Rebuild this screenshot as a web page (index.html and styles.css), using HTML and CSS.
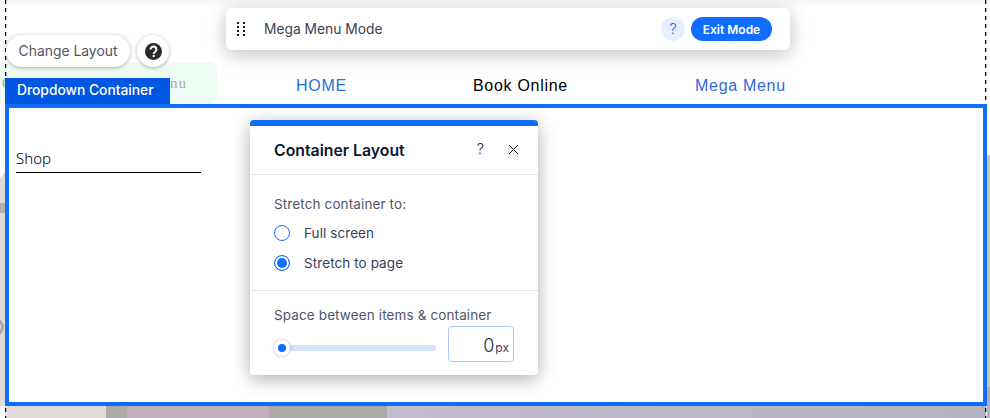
FILE: index.html
```html
<!DOCTYPE html>
<html lang="en">
<head>
    <meta charset="UTF-8">
    <title>Mega Menu Mode</title>
    <link rel="stylesheet" href="styles.css">
</head>
<body>
    <div class="stage">
        <div class="strip-left">
            <div class="cut-ring"></div>
        </div>
        <div class="strip-right"></div>

        <nav class="site-nav">
            <a class="nav-home">HOME</a>
            <a class="nav-book">Book Online</a>
            <a class="nav-mega">Mega Menu</a>
        </nav>

        <div class="ghost-tab"><span>O</span><span>Menu</span></div>

        <div class="page-strip">
            <div class="seg seg-sand"></div>
            <div class="seg seg-grey1"></div>
            <div class="seg seg-mauve"></div>
            <div class="seg seg-grey2"></div>
            <div class="seg seg-lilac"></div>
        </div>

        <div class="guide guide-left"></div>
        <div class="guide guide-right"></div>

        <div class="dropdown-box">
            <div class="shop-item">Shop</div>
        </div>
        <div class="dropdown-label">Dropdown Container</div>

        <div class="layout-row">
            <button class="pill">Change Layout</button>
            <button class="pill-help">
                <svg width="19" height="19" viewBox="0 0 19 19">
                    <circle cx="9.5" cy="9.5" r="8.5" fill="#2b2b2e"/>
                    <path d="M6.6 7.4a2.9 2.9 0 1 1 4.6 2.3c-1 .7-1.5 1.1-1.5 2.2" fill="none" stroke="#fff" stroke-width="2"/>
                    <rect x="8.6" y="13" width="2.1" height="2.1" fill="#fff"/>
                </svg>
            </button>
        </div>

        <div class="mode-bar">
            <svg class="drag" width="9" height="15" viewBox="0 0 9 15">
                <g fill="#16182c">
                    <rect x="0" y="0" width="2" height="2"/><rect x="6" y="0" width="2" height="2"/>
                    <rect x="0" y="4" width="2" height="2"/><rect x="6" y="4" width="2" height="2"/>
                    <rect x="0" y="8" width="2" height="2"/><rect x="6" y="8" width="2" height="2"/>
                    <rect x="0" y="12" width="2" height="2"/><rect x="6" y="12" width="2" height="2"/>
                </g>
            </svg>
            <span class="mode-title">Mega Menu Mode</span>
            <span class="mode-help">?</span>
            <button class="exit-btn">Exit Mode</button>
        </div>

        <div class="panel">
            <div class="panel-head">
                <h2>Container Layout</h2>
                <span class="panel-help">?</span>
                <svg class="panel-close" width="11" height="11" viewBox="0 0 11 11">
                    <path d="M1 1l9 9M10 1l-9 9" stroke="#16182c" stroke-width="1" fill="none"/>
                </svg>
            </div>
            <div class="panel-section">
                <div class="section-label">Stretch container to:</div>
                <label class="radio-row"><span class="radio"></span>Full screen</label>
                <label class="radio-row"><span class="radio radio-on"></span>Stretch to page</label>
            </div>
            <div class="panel-section section-space">
                <div class="section-label">Space between items &amp; container</div>
                <div class="slider-row">
                    <div class="slider">
                        <div class="slider-track"></div>
                        <div class="slider-knob"></div>
                    </div>
                    <div class="num-input"><span class="num">0</span><span class="unit">px</span></div>
                </div>
            </div>
        </div>
    </div>
</body>
</html>
```

FILE: styles.css
```css
html, body {
    margin: 0;
    padding: 0;
    background: #fff;
}
.stage {
    position: relative;
    width: 990px;
    height: 418px;
    overflow: hidden;
    font-family: "Inter", "Noto Sans", sans-serif;
    background: linear-gradient(#f6f6f6, #fff 8px);
}
button {
    font-family: inherit;
    border: none;
    padding: 0;
}

/* editor guides */
.guide {
    position: absolute;
    top: 0;
    width: 1px;
    height: 418px;
    background: repeating-linear-gradient(#000 0 4px, transparent 4px 8px);
    border-right: 1px solid rgba(255,255,255,0.7);
}
.guide-left { left: 5px; }
.guide-right { left: 985px; }

/* page content peeking out round the container */
.strip-left {
    position: absolute;
    left: 0;
    top: 172px;
    width: 5px;
    height: 234px;
    overflow: hidden;
    background: linear-gradient(#dfdad7 31px, #b0b0b0 31px 41px, #dfdad7 41px);
    clip-path: polygon(0 6px, 100% 0, 100% 100%, 0 100%);
}
.cut-ring {
    position: absolute;
    left: -14px;
    top: 146px;
    width: 12px;
    height: 12px;
    border: 3px solid #a9a7a5;
    border-radius: 50%;
}
.strip-right {
    position: absolute;
    left: 987px;
    top: 155px;
    width: 3px;
    height: 263px;
    background: linear-gradient(#c3ccc9 232px, #b5b1c0 232px);
}

/* site menu behind the overlays */
.site-nav {
    position: absolute;
    left: 0;
    top: 77px;
    font-family: "Liberation Sans", Arial, sans-serif;
    font-size: 16px;
    letter-spacing: 0.7px;
    line-height: 18px;
}
.site-nav a { position: absolute; top: 0; white-space: nowrap; }
.nav-home { left: 296px; color: #1f6fe0; }
.nav-book { left: 473px; color: #000; }
.nav-mega { left: 695px; color: #2f68d8; }

.ghost-tab {
    position: absolute;
    left: 0;
    top: 62px;
    width: 217px;
    height: 42px;
    box-sizing: border-box;
    padding: 12px 30px 0 2px;
    display: flex;
    justify-content: space-between;
    background: #eefbf3;
    border-radius: 0 8px 8px 0;
    font-family: "Liberation Serif", serif;
    font-size: 15px;
    letter-spacing: 1px;
    line-height: 18px;
    color: #a5ada5;
}

.page-strip {
    position: absolute;
    left: 5px;
    top: 406px;
    width: 985px;
    height: 12px;
    display: flex;
}
.seg-sand { width: 101px; background: #e0d9d6; }
.seg-grey1 { width: 21px; background: #ababab; }
.seg-mauve { width: 142px; background: #c2afbd; }
.seg-grey2 { width: 118px; background: #ababab; }
.seg-lilac { flex: 1; background: linear-gradient(90deg, #c5bccf, #b5b1c0); }

/* selected container */
.dropdown-box {
    position: absolute;
    left: 5px;
    top: 104px;
    width: 974px;
    height: 294px;
    background: #fff;
    border: 4px solid #116dff;
}
.shop-item {
    position: absolute;
    left: 7px;
    top: 38px;
    width: 185px;
    height: 26px;
    border-bottom: 1px solid #000;
    font-family: "Noto Sans", sans-serif;
    font-weight: 300;
    font-size: 15px;
    line-height: 24px;
    color: #000;
}
.dropdown-label {
    position: absolute;
    left: 5px;
    top: 78px;
    width: 165px;
    height: 26px;
    box-sizing: border-box;
    padding-left: 12px;
    background: #0057e1;
    color: #fff;
    font-size: 13.8px;
    font-weight: 500;
    line-height: 25px;
}

.layout-row {
    position: absolute;
    left: 6px;
    top: 35px;
    display: flex;
    gap: 7px;
}
.pill {
    height: 32px;
    width: 124px;
    background: #fff;
    border-radius: 16px;
    box-shadow: 0 1px 4px rgba(0,0,0,0.3);
    color: #555559;
    font-size: 13.9px;
}
.pill-help {
    width: 32px;
    height: 32px;
    border-radius: 50%;
    background: #fff;
    box-shadow: 0 1px 4px rgba(0,0,0,0.3);
    display: flex;
    align-items: center;
    justify-content: center;
}

/* mode bar */
.mode-bar {
    position: absolute;
    left: 226px;
    top: 8px;
    width: 564px;
    height: 42px;
    box-sizing: border-box;
    padding: 0 18px 0 11px;
    display: flex;
    align-items: center;
    background: #fff;
    border-radius: 6px;
    box-shadow: 0 4px 20px rgba(0,0,0,0.25);
}
.mode-title {
    margin-left: 18px;
    flex: 1;
    font-size: 13.8px;
    color: #3b4057;
}
.mode-help {
    width: 24px;
    height: 24px;
    border-radius: 50%;
    background: #e7f0ff;
    color: #116dff;
    font-size: 15px;
    font-weight: 300;
    line-height: 24px;
    text-align: center;
}
.exit-btn {
    margin-left: 6px;
    width: 81px;
    height: 24px;
    border-radius: 12px;
    background: #116dff;
    color: #fff;
    font-size: 12px;
    font-weight: 600;
}

/* settings panel */
.panel {
    position: absolute;
    left: 250px;
    top: 120px;
    width: 288px;
    height: 255px;
    background: #fff;
    border-top: 6px solid #116dff;
    box-sizing: border-box;
    border-radius: 4px;
    box-shadow: 0 4px 18px rgba(0,0,0,0.32);
}
.panel-head {
    height: 49px;
    box-sizing: border-box;
    padding: 0 19px 0 24px;
    display: flex;
    align-items: center;
    border-bottom: 1px solid #dfe5eb;
}
.panel-head h2 {
    margin: 0;
    flex: 1;
    font-size: 15.8px;
    font-weight: 600;
    color: #0c1534;
}
.panel-help {
    font-size: 15px;
    font-weight: 300;
    color: #162d3d;
    margin-right: 24px;
    margin-top: -3px;
}
.panel-close { margin-top: -2px; }
.panel-section {
    padding: 20px 24px 0;
    height: 116px;
    box-sizing: border-box;
    border-bottom: 1px solid #dfe5eb;
}
.section-space {
    border-bottom: none;
    padding-top: 15px;
    height: auto;
}
.section-label {
    font-size: 13.5px;
    letter-spacing: 0.12px;
    line-height: 18px;
    color: #50556b;
}
.radio-row {
    display: flex;
    align-items: center;
    gap: 14px;
    height: 30px;
    font-size: 13.5px;
    letter-spacing: 0.08px;
    color: #3b4057;
}
.radio-row:first-of-type { margin-top: 5px; }
.radio {
    box-sizing: border-box;
    width: 16px;
    height: 16px;
    border: 1px solid #116dff;
    border-radius: 50%;
    background: #fff;
}
.radio-on {
    background: #116dff;
    box-shadow: inset 0 0 0 2px #fff;
}
.slider-row {
    display: flex;
    align-items: center;
    justify-content: space-between;
    margin-top: 2px;
}
.slider {
    position: relative;
    width: 162px;
    height: 18px;
    align-self: flex-end;
    margin-bottom: 5px;
}
.slider-track {
    position: absolute;
    left: 0;
    right: 0;
    top: 6px;
    height: 6px;
    border-radius: 3px;
    background: #d3e3fb;
}
.slider-knob {
    position: absolute;
    left: 0;
    top: 1px;
    width: 8px;
    height: 8px;
    border: 4px solid #fff;
    border-radius: 50%;
    background: #116dff;
    box-shadow: 0 0 3px rgba(0,0,0,0.35);
}
.num-input {
    box-sizing: border-box;
    width: 66px;
    height: 36px;
    border: 1px solid #a8caff;
    border-radius: 4px;
    padding: 2px 4px 0 0;
    display: flex;
    align-items: baseline;
    justify-content: flex-end;
    line-height: 34px;
}
.num { font-size: 18px; color: #162d3d; font-weight: 300; }
.unit { font-size: 12px; margin-left: 1px; color: #3b4057; }
```
